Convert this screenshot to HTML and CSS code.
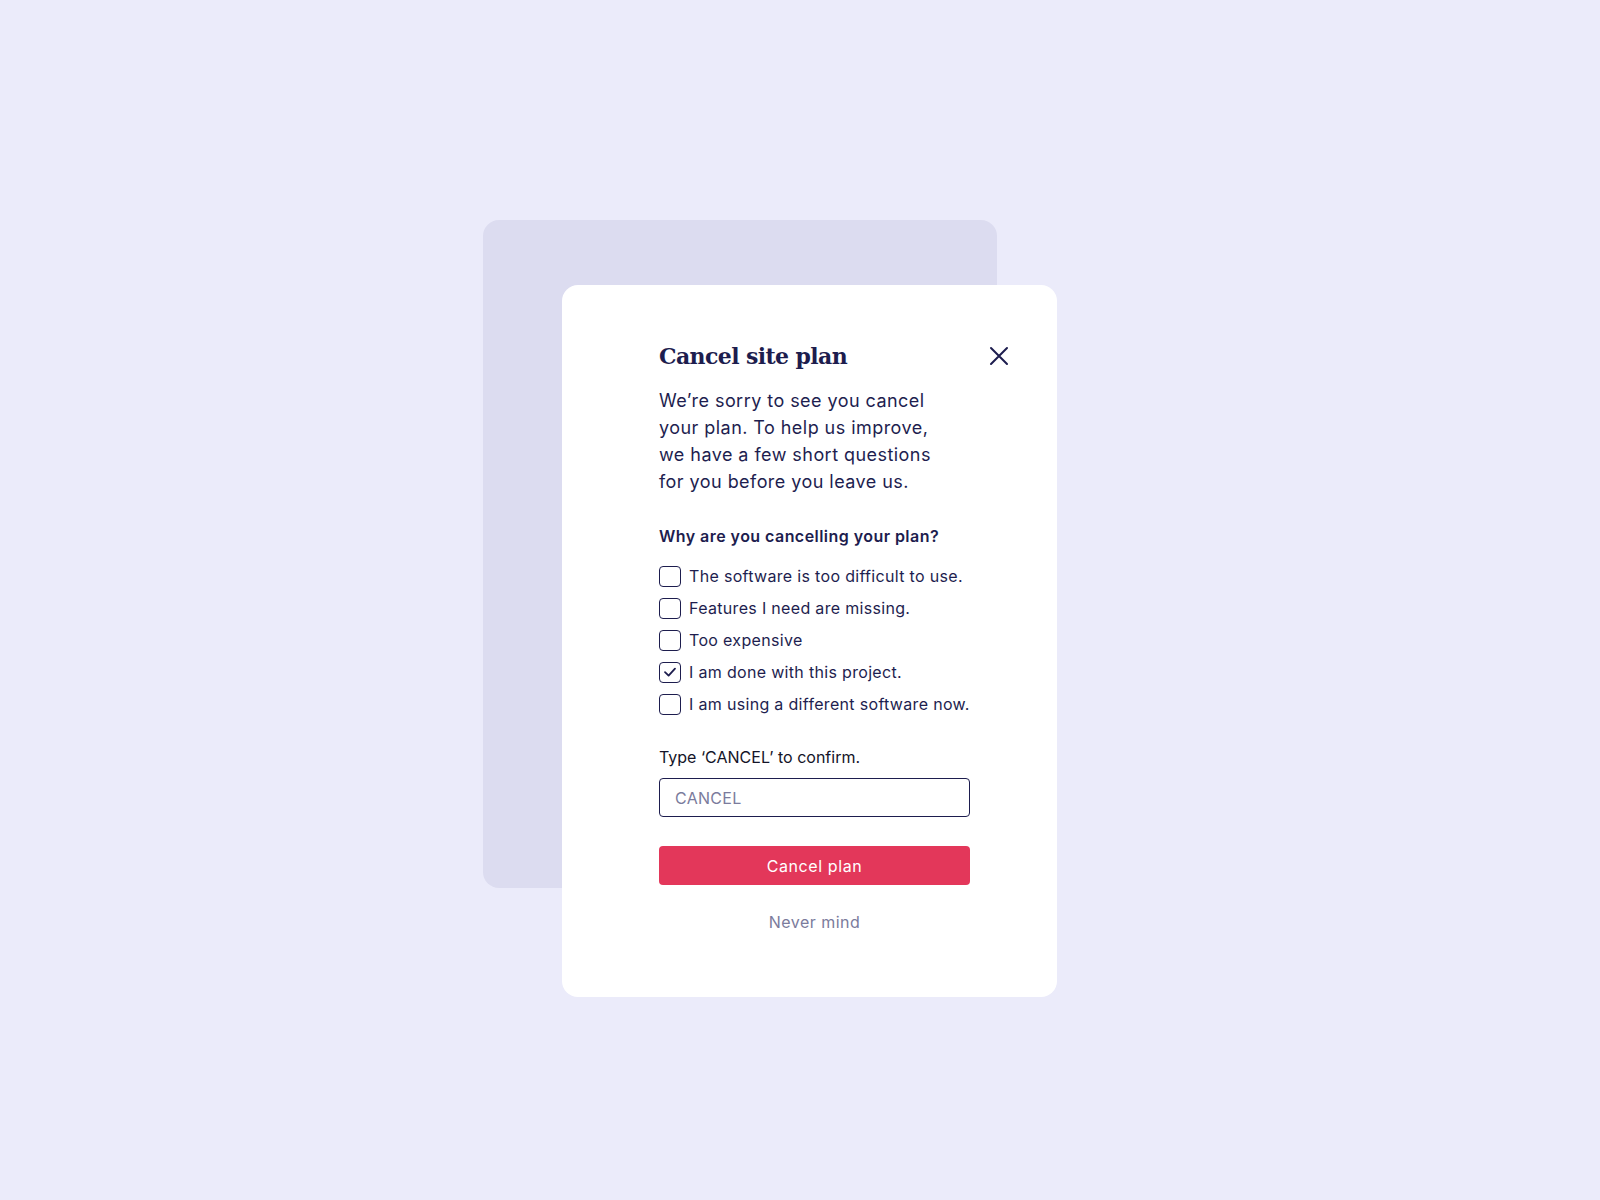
FILE: index.html
```html
<!DOCTYPE html>
<html lang="en">
<head>
<meta charset="utf-8">
<title>Cancel site plan</title>
<link rel="stylesheet" href="styles.css">
</head>
<body>
<main class="stage">
  <div class="stack">
    <div class="back-card"></div>
    <section class="modal">
      <header class="modal-head">
        <h1 class="modal-title">Cancel site plan</h1>
        <button class="close-btn" aria-label="Close">
          <svg width="20" height="20" viewBox="0 0 20 20"><path d="M2 2 L18 18 M18 2 L2 18" stroke="#1d1d4e" stroke-width="2" fill="none" stroke-linecap="round"/></svg>
        </button>
      </header>
      <p class="intro">We’re sorry to see you cancel<br>your plan. To help us improve,<br>we have a few short questions<br>for you before you leave us.</p>
      <h2 class="question">Why are you cancelling your plan?</h2>
      <ul class="options">
        <li class="option"><span class="box"></span><span>The software is too difficult to use.</span></li>
        <li class="option"><span class="box"></span><span>Features I need are missing.</span></li>
        <li class="option"><span class="box"></span><span>Too expensive</span></li>
        <li class="option"><span class="box checked"><svg width="14" height="14" viewBox="0 0 14 14"><path d="M2 7.2 L5.6 10.6 L12 3.6" stroke="#1d1d4e" stroke-width="1.8" fill="none" stroke-linecap="round" stroke-linejoin="round"/></svg></span><span>I am done with this project.</span></li>
        <li class="option"><span class="box"></span><span>I am using a different software now.</span></li>
      </ul>
      <label class="confirm-label" for="confirm">Type ‘CANCEL’ to confirm.</label>
      <input id="confirm" class="confirm-input" type="text" placeholder="CANCEL">
      <button class="danger-btn">Cancel plan</button>
      <a class="never-mind" href="#">Never mind</a>
    </section>
  </div>
</main>
</body>
</html>
```

FILE: styles.css
```css
* { box-sizing: border-box; }

html, body {
  margin: 0;
  padding: 0;
}

body {
  background: #ebebfa;
  width: 1600px;
  height: 1200px;
  font-family: "Inter", "Open Sans", sans-serif;
  color: #1e1e4f;
}

.stage {
  padding: 220px 0 0 483px;
}

.stack {
  display: grid;
  width: 574px;
}

.back-card,
.modal {
  grid-area: 1 / 1;
}

.back-card {
  width: 514px;
  height: 668px;
  background: #dcdcf0;
  border-radius: 16px;
}

.modal {
  margin: 65px 0 0 79px;
  width: 495px;
  height: 712px;
  background: #ffffff;
  border-radius: 16px;
  padding: 55px 49px 0 97px;
  display: flex;
  flex-direction: column;
  align-items: flex-start;
}

.modal-head {
  width: 100%;
  display: flex;
  align-items: center;
  justify-content: space-between;
  height: 32px;
}

.modal-title {
  margin: 0;
  font-family: "DejaVu Serif", "Liberation Serif", serif;
  font-weight: bold;
  font-size: 22px;
  line-height: 32px;
  color: #1d1d4e;
  letter-spacing: -0.6px;
}

.close-btn {
  border: 0;
  background: none;
  padding: 0;
  width: 20px;
  height: 20px;
  margin-right: -1px;
  display: flex;
}

.intro {
  margin: 15px 0 0;
  font-size: 18px;
  line-height: 27px;
  letter-spacing: 0.45px;
  color: #1e1e4f;
}

.question {
  margin: 29px 0 0;
  font-size: 16px;
  line-height: 24px;
  font-weight: 600;
  letter-spacing: 0.45px;
  color: #1d1d4e;
}

.options {
  list-style: none;
  margin: 12px 0 0;
  padding: 0;
}

.option {
  display: flex;
  align-items: center;
  gap: 8px;
  height: 32px;
  font-size: 16px;
  letter-spacing: 0.32px;
  color: #1e1e4f;
}

.box {
  width: 22px;
  height: 21px;
  border: 1.5px solid #1d1d4e;
  border-radius: 4px;
  display: flex;
  align-items: center;
  justify-content: center;
  flex: none;
}

.confirm-label {
  margin-top: 25px;
  font-size: 16px;
  line-height: 24px;
  letter-spacing: 0;
  color: #141428;
}

.confirm-input {
  margin-top: 9px;
  width: 311px;
  height: 39px;
  border: 1.5px solid #1d1d4e;
  border-radius: 4px;
  padding: 0 15px;
  font-family: inherit;
  font-size: 16px;
  letter-spacing: 0.3px;
  color: #1e1e4f;
  outline: none;
}

.confirm-input::placeholder {
  color: #7b7b9c;
}

.danger-btn {
  margin-top: 29px;
  width: 311px;
  height: 39px;
  border: 0;
  border-radius: 4px;
  background: #e3375a;
  color: #ffffff;
  font-family: inherit;
  font-size: 16px;
  letter-spacing: 0.6px;
}

.never-mind {
  margin-top: 25px;
  width: 311px;
  text-align: center;
  font-size: 16px;
  line-height: 24px;
  letter-spacing: 0.5px;
  color: #7b7b9c;
  text-decoration: none;
}
```
